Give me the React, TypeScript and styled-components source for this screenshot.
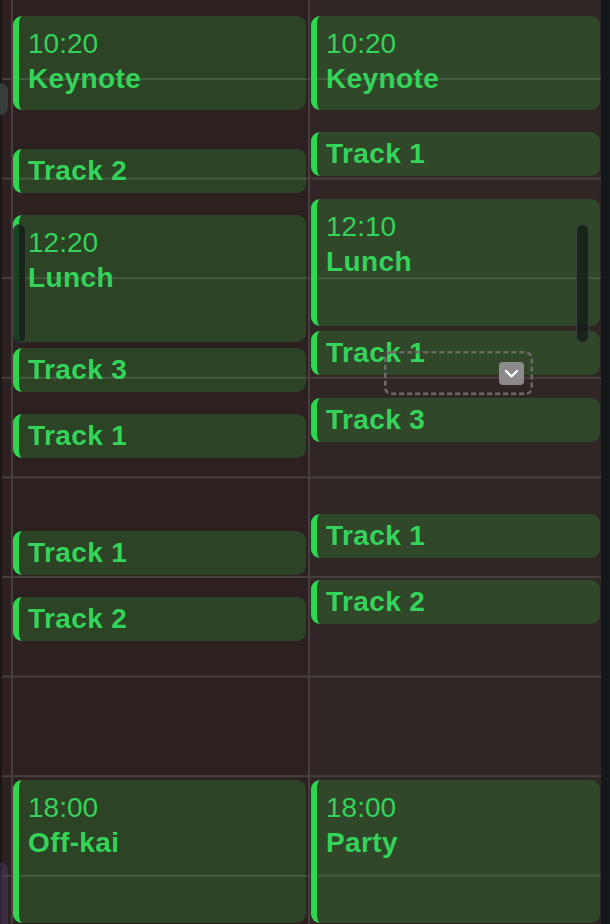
import React from "react";
import styled, { createGlobalStyle } from "styled-components";

const GlobalStyle = createGlobalStyle`
  html, body { margin: 0; padding: 0; background: #2c2020; }
  body { font-family: "Liberation Sans", Arial, sans-serif; }
`;

const LINE = "#463f3e";
const PX_PER_MIN = 1.66;
const ORIGIN_MIN = 620; // 10:20
const ORIGIN_TOP = 16;

const hourGrid = `linear-gradient(to bottom, ${LINE} 0, ${LINE} 2px, transparent 2px) 0 78px / 100% 99.6px repeat-y`;

const Board = styled.div`
  width: 610px;
  height: 924px;
  overflow: hidden;
  display: grid;
  grid-template-columns: 11px 297px 293px 9px;
`;

const Gutter = styled.div`
  position: relative;
  border-left: 2px solid #1b1717;
  background: ${hourGrid}, #2c2020;
`;

const GutterRemnant = styled.div<{ $top: number; $height: number; $tone: "gray" | "purple" }>`
  position: absolute;
  left: -8px;
  width: 14px;
  top: ${(p) => p.$top}px;
  height: ${(p) => p.$height}px;
  border-radius: 0 8px 8px 0;
  background: ${(p) => (p.$tone === "gray" ? "#383c3c" : "rgba(110, 80, 170, 0.25)")};
`;

const DayColumn = styled.div<{ $bg: string }>`
  position: relative;
  border-left: 2px solid ${LINE};
  background: ${hourGrid}, ${(p) => p.$bg};
`;

const Strip = styled.div`
  background: #14181b;
`;

const Card = styled.div<{ $tall: boolean; $left: number; $right: number }>`
  position: absolute;
  left: ${(p) => p.$left}px;
  right: ${(p) => p.$right}px;
  box-sizing: border-box;
  border-left: 6px solid #2fd650;
  border-radius: 9px;
  background: rgba(50, 210, 60, 0.2);
  padding: ${(p) => (p.$tall ? "10px" : "4px")} 9px 0 9px;
  overflow: hidden;
  color: #34d35a;
  font-size: 28px;
  line-height: 35px;
  white-space: nowrap;
`;

const TimeLabel = styled.div`
  font-weight: 400;
`;

const Title = styled.div`
  font-weight: 700;
  letter-spacing: 0.4px;
`;

const ScrollThumb = styled.div<{ $side: "left" | "right" }>`
  position: absolute;
  top: 224px;
  height: 119px;
  width: 13px;
  box-sizing: border-box;
  border-radius: 7px;
  background: rgba(20, 28, 24, 0.8);
  border: 1px solid #37403f;
  ${(p) => (p.$side === "left" ? "left: 0;" : "right: 12px;")}
`;

const Selection = styled.div`
  position: absolute;
  left: 74px;
  top: 351px;
  width: 149px;
  height: 44px;
  box-sizing: border-box;
  display: flex;
  align-items: center;
  justify-content: flex-end;
  padding-right: 9px;
`;

const DashOutline = styled.svg`
  position: absolute;
  inset: 0;
  overflow: visible;
`;

const ChevronButton = styled.div`
  position: relative;
  width: 25px;
  height: 23px;
  border-radius: 4px;
  background: #8c8a8a;
  display: flex;
  align-items: center;
  justify-content: center;
`;

type Ev = { start: string; end: string; title: string; showTime?: boolean };

const toMin = (t: string) => {
  const [h, m] = t.split(":").map(Number);
  return h * 60 + m;
};

const leftEvents: Ev[] = [
  { start: "10:20", end: "11:20", title: "Keynote", showTime: true },
  { start: "11:40", end: "12:10", title: "Track 2" },
  { start: "12:20", end: "13:40", title: "Lunch", showTime: true },
  { start: "13:40", end: "14:10", title: "Track 3" },
  { start: "14:20", end: "14:50", title: "Track 1" },
  { start: "15:30", end: "16:00", title: "Track 1" },
  { start: "16:10", end: "16:40", title: "Track 2" },
  { start: "18:00", end: "19:30", title: "Off-kai", showTime: true },
];

const rightEvents: Ev[] = [
  { start: "10:20", end: "11:20", title: "Keynote", showTime: true },
  { start: "11:30", end: "12:00", title: "Track 1" },
  { start: "12:10", end: "13:30", title: "Lunch", showTime: true },
  { start: "13:30", end: "14:00", title: "Track 1" },
  { start: "14:10", end: "14:40", title: "Track 3" },
  { start: "15:20", end: "15:50", title: "Track 1" },
  { start: "16:00", end: "16:30", title: "Track 2" },
  { start: "18:00", end: "19:30", title: "Party", showTime: true },
];

const EventCard: React.FC<{ ev: Ev; left: number; right: number }> = ({ ev, left, right }) => {
  const s = toMin(ev.start);
  const e = toMin(ev.end);
  const top = Math.round(ORIGIN_TOP + (s - ORIGIN_MIN) * PX_PER_MIN);
  const height = Math.round((e - s) * PX_PER_MIN - 6);
  return (
    <Card $tall={!!ev.showTime} $left={left} $right={right} style={{ top, height }}>
      {ev.showTime && <TimeLabel>{ev.start}</TimeLabel>}
      <Title>{ev.title}</Title>
    </Card>
  );
};

export default function App() {
  return (
    <>
      <GlobalStyle />
      <Board>
        <Gutter>
          <GutterRemnant $tone="gray" $top={83} $height={32} />
          <GutterRemnant $tone="purple" $top={862} $height={90} />
        </Gutter>
        <DayColumn $bg="#2c2020">
          {leftEvents.map((ev, i) => (
            <EventCard key={i} ev={ev} left={0} right={2} />
          ))}
          <ScrollThumb $side="left" />
        </DayColumn>
        <DayColumn $bg="#302625">
          {rightEvents.map((ev, i) => (
            <EventCard key={i} ev={ev} left={1} right={1} />
          ))}
          <ScrollThumb $side="right" />
          <Selection>
            <DashOutline width="149" height="44" viewBox="0 0 149 44">
              <rect
                x="1.25"
                y="1.25"
                width="146.5"
                height="41.5"
                rx="6"
                fill="none"
                stroke="#6d6968"
                strokeWidth="2.5"
                strokeDasharray="5 3"
              />
            </DashOutline>
            <ChevronButton>
              <svg width="25" height="23" viewBox="0 0 25 23">
                <path
                  d="M7 9 L12.5 14.5 L18 9"
                  fill="none"
                  stroke="#ffffff"
                  strokeWidth="2.2"
                  strokeLinecap="round"
                  strokeLinejoin="round"
                />
              </svg>
            </ChevronButton>
          </Selection>
        </DayColumn>
        <Strip />
      </Board>
    </>
  );
}
